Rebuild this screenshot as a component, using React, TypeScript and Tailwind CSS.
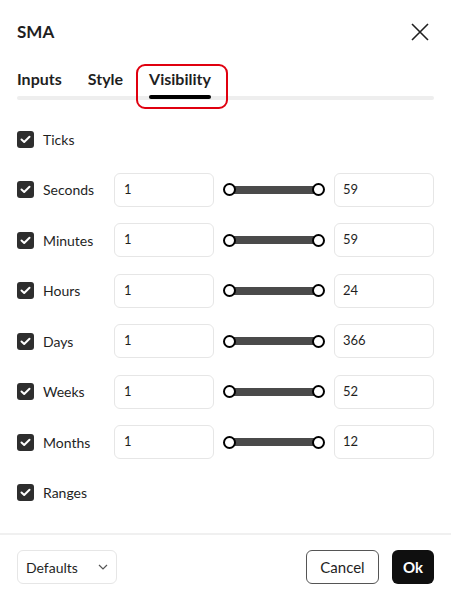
import React from "react";

const font = { fontFamily: "Lato, 'Noto Sans', sans-serif" };

function Check() {
  return (
    <div className="w-[17px] h-[17px] rounded-[3px] bg-[#2e2e2e] flex items-center justify-center shrink-0">
      <svg width="11" height="9" viewBox="0 0 11 9" fill="none">
        <path d="M1.5 4.5 L4.2 7 L9.5 1.8" stroke="white" strokeWidth="2" strokeLinecap="round" strokeLinejoin="round" />
      </svg>
    </div>
  );
}

function Slider() {
  return (
    <div className="flex-1 flex items-center px-[9px]">
      <div className="relative w-full h-[13px] flex items-center">
        <div className="absolute left-[5px] right-[5px] h-[8px] bg-[#4a4a4a]" />
        <div className="absolute left-0 w-[13px] h-[13px] rounded-full border-2 border-black bg-white" />
        <div className="absolute right-0 w-[13px] h-[13px] rounded-full border-2 border-black bg-white" />
      </div>
    </div>
  );
}

function Row({ label, max }: { label: string; max?: string }) {
  return (
    <div className="flex items-center h-[34px]">
      <Check />
      <span className="ml-[9px] text-[14px] text-[#1f1f1f] w-[71px]">{label}</span>
      {max !== undefined && (
        <div className="flex flex-1 items-center">
          <div className="w-[100px] h-[34px] rounded-[6px] border border-[#e6e6e6] flex items-center px-[9px] text-[13px] text-[#1f1f1f]">1</div>
          <Slider />
          <div className="w-[100px] h-[34px] rounded-[6px] border border-[#e6e6e6] flex items-center px-[8px] text-[13px] text-[#1f1f1f]">{max}</div>
        </div>
      )}
    </div>
  );
}

export default function App() {
  return (
    <div className="w-[451px] h-[600px] bg-white relative overflow-hidden" style={font}>
      <div className="flex items-center justify-between px-[17px] pt-[20px] h-[44px]">
        <span className="text-[17px] font-bold text-[#1f1f1f]">SMA</span>
        <svg width="18" height="18" viewBox="0 0 18 18" className="mr-[5px]">
          <path d="M1 1 L17 17 M17 1 L1 17" stroke="#1f1f1f" strokeWidth="1.6" />
        </svg>
      </div>
      <div className="px-[17px] mt-[23px]">
        <div className="relative">
          <div className="flex gap-[26px] text-[16px] font-bold text-[#1f1f1f] h-[24px] leading-[24px]">
            <div>Inputs</div>
            <div>Style</div>
            <div className="relative">
              Visibility
              <div className="absolute left-0 right-0 top-[28px] h-[4px] rounded-full bg-black z-10" />
              <div className="absolute -left-[13px] -right-[17px] -top-[3px] h-[45px] rounded-[9px] border-2 border-[#e0000f] z-20" />
            </div>
          </div>
          <div className="mt-[5px] h-[4px] bg-[#eeeeee] rounded-full" />
        </div>
      </div>
      <div className="px-[17px] mt-[22px] flex flex-col gap-[16.5px]">
        <Row label="Ticks" />
        <Row label="Seconds" max="59" />
        <Row label="Minutes" max="59" />
        <Row label="Hours" max="24" />
        <Row label="Days" max="366" />
        <Row label="Weeks" max="52" />
        <Row label="Months" max="12" />
        <Row label="Ranges" />
      </div>
      <div className="absolute left-0 right-0 bottom-0 h-[67px] border-t-2 border-[#f0f0f0] flex items-center justify-between px-[17px] pb-[1px]">
        <div className="w-[100px] h-[34px] rounded-[6px] border border-[#e6e6e6] flex items-center justify-between pl-[8px] pr-[8px] text-[14px] text-[#1f1f1f]">
          <span>Defaults</span>
          <svg width="10" height="6" viewBox="0 0 10 6"><path d="M1 1 L5 5 L9 1" stroke="#555" strokeWidth="1.2" fill="none" /></svg>
        </div>
        <div className="flex gap-[13px]">
          <div className="w-[73px] h-[34px] rounded-[6px] border border-[#555] flex items-center justify-center text-[15px] text-[#1f1f1f]">Cancel</div>
          <div className="w-[42px] h-[34px] rounded-[6px] bg-[#0f0f0f] flex items-center justify-center text-[15px] font-bold text-white">Ok</div>
        </div>
      </div>
    </div>
  );
}
